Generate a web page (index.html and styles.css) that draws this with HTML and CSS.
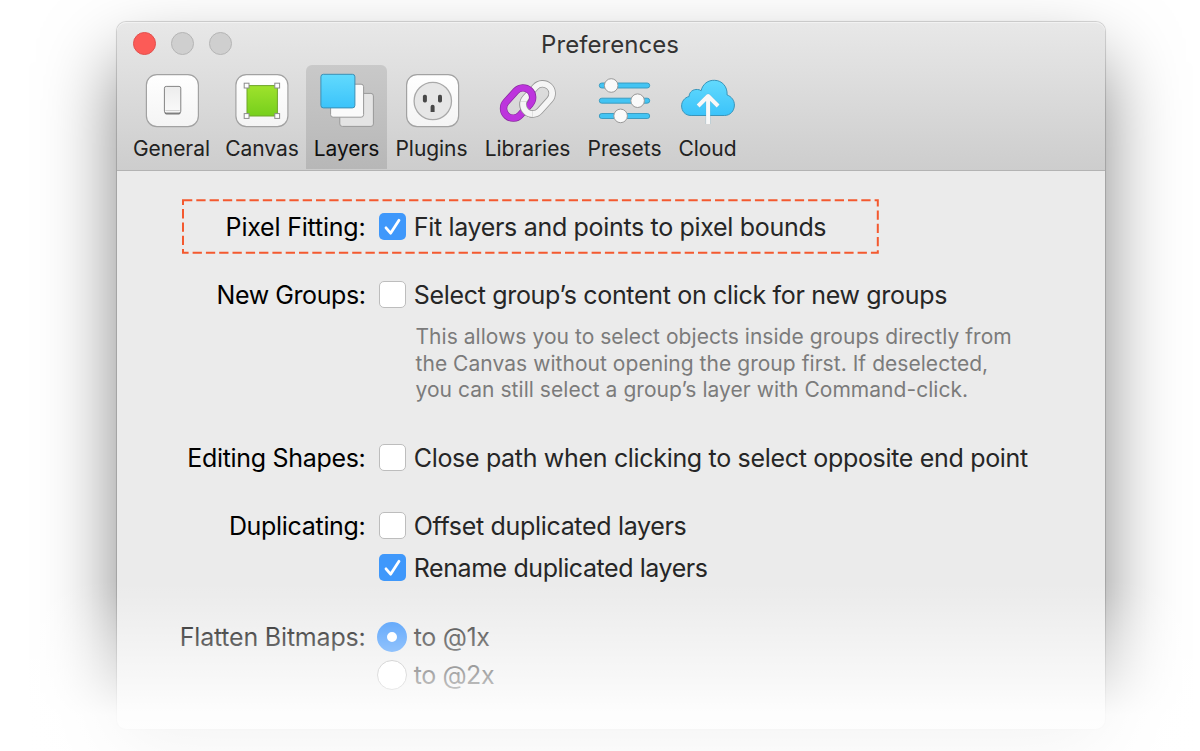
FILE: index.html
```
<!DOCTYPE html>
<html lang="en">
<head>
<meta charset="utf-8">
<title>Preferences</title>
<link rel="stylesheet" href="styles.css">
</head>
<body>
<main class="window">
  <header class="chrome">
    <div class="titlebar">
      <div class="lights"><i class="light close"></i><i class="light"></i><i class="light"></i></div>
      <h1 class="title">Preferences</h1>
    </div>
    <nav class="toolbar">
      <a class="tool general">
        <svg class="icon" viewBox="0.4 0 60 60">
          <defs>
            <linearGradient id="paper" x1="0" y1="0" x2="0" y2="1"><stop offset="0" stop-color="#fff"/><stop offset="1" stop-color="#f4f4f4"/></linearGradient>
            <linearGradient id="key" x1="0" y1="0" x2="0" y2="1"><stop offset="0" stop-color="#ececec"/><stop offset="1" stop-color="#fafafa"/></linearGradient>
          </defs>
          <rect class="tile" x="4.8" y="4.6" width="52" height="52" rx="10.5"/>
          <rect x="23" y="17" width="16" height="27.6" rx="1.8" fill="#777"/>
          <rect x="22.8" y="16.4" width="16.4" height="26.6" rx="1.8" fill="url(#key)" stroke="#868686" stroke-width="1"/>
          <path d="M23.8 40.6h14.4" stroke="#ccc"/>
        </svg>
        <span>General</span>
      </a>
      <a class="tool canvas">
        <svg class="icon" viewBox="0.4 0 60 60">
          <defs><linearGradient id="green" x1="0" y1="0" x2="0" y2="1"><stop offset="0" stop-color="#9fe22c"/><stop offset="1" stop-color="#76cf1c"/></linearGradient></defs>
          <rect class="tile" x="4.3" y="4.6" width="52" height="52" rx="10.5"/>
          <rect x="15.4" y="15.6" width="30.4" height="30.4" fill="url(#green)" stroke="#6fa52a"/>
          <g class="handle"><rect x="12.6" y="13.2" width="4.8" height="4.8"/><rect x="43.2" y="13.2" width="4.8" height="4.8"/><rect x="12.6" y="43.6" width="4.8" height="4.8"/><rect x="43.2" y="43.6" width="4.8" height="4.8"/></g>
        </svg>
        <span>Canvas</span>
      </a>
      <a class="tool layers active">
        <svg class="icon" viewBox="0.4 0 60 60">
          <defs><linearGradient id="sky" x1="0" y1="0" x2="0" y2="1"><stop offset="0" stop-color="#62dafd"/><stop offset="1" stop-color="#3bc3fa"/></linearGradient></defs>
          <rect x="23.2" y="23.4" width="33.6" height="33" rx="2.5" fill="#e4e4e4" stroke="#999"/>
          <rect x="14" y="14.2" width="33" height="33" rx="2.5" fill="#fafafa" stroke="#999"/>
          <rect x="4.3" y="4.3" width="34" height="33.6" rx="2.5" fill="url(#sky)" stroke="#3b8fb5"/>
        </svg>
        <span>Layers</span>
      </a>
      <a class="tool plugins">
        <svg class="icon" viewBox="0.4 0 60 60">
          <rect class="tile" x="5" y="4.6" width="52" height="52" rx="10.5"/>
          <circle cx="31.2" cy="31" r="18.7" fill="#e6e6e6" stroke="#a9a9a9" stroke-width="1.3"/>
          <g fill="#484848"><rect x="21.3" y="24.8" width="4" height="7.6" rx="1.6"/><rect x="36.4" y="24.8" width="4" height="7.6" rx="1.6"/><path d="M29 42v-5.2a2 2 0 0 1 4 0V42z"/></g>
        </svg>
        <span>Plugins</span>
      </a>
      <a class="tool libraries">
        <svg class="icon" viewBox="0.4 0 60 60">
          <defs>
            <clipPath id="front"><path d="M18 31.500h17v22H18z"/></clipPath>
            <g id="ring"><rect x="-17" y="-9.600" width="34" height="19.200" rx="9.600"/></g>
          </defs>
          <g fill="none" transform="translate(40 28.900) rotate(-48)"><use href="#ring" stroke="#999" stroke-width="7.400"/><use href="#ring" stroke="#f5f5f5" stroke-width="5.800"/></g>
          <g fill="none" transform="translate(20.500 33) rotate(-48)"><use href="#ring" stroke="#8a2ba0" stroke-width="7.400"/><use href="#ring" stroke="#bd34dd" stroke-width="6"/></g>
          <g clip-path="url(#front)"><g fill="none" transform="translate(40 28.900) rotate(-48)"><use href="#ring" stroke="#999" stroke-width="7.400"/><use href="#ring" stroke="#f5f5f5" stroke-width="5.800"/></g></g>
        </svg>
        <span>Libraries</span>
      </a>
      <a class="tool presets">
        <svg class="icon" viewBox="0.4 0 60 60">
          <g fill="#43c4f3" stroke="#3497bd" stroke-width=".9"><rect x="4.700" y="13" width="50.400" height="5" rx="2.500"/><rect x="4.700" y="28.200" width="50.400" height="5" rx="2.500"/><rect x="4.700" y="43.500" width="50.400" height="5" rx="2.500"/></g>
          <g fill="#fafafa" stroke="#999"><circle cx="16.600" cy="15.500" r="6.800"/><circle cx="43" cy="30.700" r="6.800"/><circle cx="26" cy="45.900" r="6.800"/></g>
        </svg>
        <span>Presets</span>
      </a>
      <a class="tool cloud">
        <svg class="icon" viewBox="0.4 0 60 60">
          <path d="M13.500 45.500C7.500 45.500 4 41 4 36c0-4.500 3-8.500 7.500-9.500C11.500 22 15.500 19 20 19.500c1.500 0 2.500.5 3.500 1.300C25 14 30.500 10 37 10.300 44.500 10.500 50 16.500 49.500 25 54 26.500 56.800 30.500 56.800 35c0 6-4.300 10.500-9.800 10.500z" fill="url(#sky)" stroke="#3a95ba"/>
          <path d="M30.500 54V27M20.500 36l10-10 10 10" fill="none" stroke="#5aa6c4" stroke-width="4.800" stroke-linejoin="round" opacity=".45"/>
          <path d="M30.500 54V27M20.500 36l10-10 10 10" fill="none" stroke="#f8f8f8" stroke-width="4" stroke-linejoin="round"/>
        </svg>
        <span>Cloud</span>
      </a>
    </nav>
  </header>

  <section class="form">
    <div class="row highlight">
      <svg class="dashes" viewBox="0 0 698 55"><rect x="1" y="1.300" width="694.800" height="52.400"/></svg>
      <span class="label loose">Pixel Fitting:</span><span class="slot"><i class="box on"><svg viewBox="0 0 27 27"><path d="M7 14.800l4.600 5.400L20 7.300"/></svg></i></span><span class="text">Fit layers and points to pixel bounds</span>
    </div>
    <div class="row groups">
      <span class="label tight">New Groups:</span><span class="slot"><i class="box"></i></span><span class="text">Select group’s content on click for new groups</span>
    </div>
    <p class="hint">This allows you to select objects inside groups directly from<br>the Canvas without opening the group first. If deselected,<br>you can still select a group’s layer with Command-click.</p>
    <div class="row editing">
      <span class="label">Editing Shapes:</span><span class="slot"><i class="box"></i></span><span class="text">Close path when clicking to select opposite end point</span>
    </div>
    <div class="row duplicating">
      <span class="label">Duplicating:</span><span class="slot"><i class="box"></i></span><span class="text">Offset duplicated layers</span>
    </div>
    <div class="row rename">
      <span class="label"></span><span class="slot"><i class="box on"><svg viewBox="0 0 27 27"><path d="M7 14.800l4.600 5.400L20 7.300"/></svg></i></span><span class="text tight">Rename duplicated layers</span>
    </div>
    <div class="row flatten">
      <span class="label loose">Flatten Bitmaps:</span><span class="slot"><i class="radio on"></i></span><span class="text">to @1x</span>
    </div>
    <div class="row double">
      <span class="label"></span><span class="slot"><i class="radio"></i></span><span class="text tight">to @2x</span>
    </div>
  </section>
</main>
<div class="fade"></div>
</body>
</html>
```
FILE: styles.css
```
* { box-sizing: border-box; }
body {
  margin: 0;
  height: 751px;
  padding: 22px 0 0 117px;
  overflow: hidden;
  position: relative;
  background: #fff;
  font-family: Inter, "Liberation Sans", sans-serif;
  color: #262626;
}
.window {
  width: 988px;
  height: 707px;
  border-radius: 9px;
  background: #ebebeb;
  box-shadow: 0 0 0 1px rgba(0,0,0,.1), 0 0 2px rgba(0,0,0,.2), 0 38px 76px -2px rgba(0,0,0,.5);
  display: flex;
  flex-direction: column;
}
.chrome {
  height: 149px;
  border-radius: 9px 9px 0 0;
  background: linear-gradient(#e8e8e8, #cdcdcd);
  border-bottom: 1px solid #b3b3b3;
  box-shadow: inset 0 1px 0 #f2f2f2;
}
.titlebar {
  height: 43px;
  display: grid;
  grid-template-columns: 120px 1fr 122px;
  align-items: center;
}
.lights { display: flex; gap: 15px; padding: 0 0 1px 15.500px; }
.light {
  flex: none;
  width: 23px;
  height: 23px;
  border-radius: 50%;
  background: #cfcfcf;
  border: 1px solid #b5b5b5;
}
.light.close { background: #fc5b57; border-color: #e2504d; }
.title {
  margin: 0;
  text-align: center;
  font-size: 24px;
  font-weight: 400;
  line-height: 43px;
  letter-spacing: .05px;
  padding-top: 1px;
  color: #333;
}
.toolbar { display: flex; padding-left: 9px; }
.tool {
  height: 104px;
  padding-top: 5px;
  display: flex;
  flex-direction: column;
  align-items: center;
  font-size: 21px;
  line-height: 26px;
  letter-spacing: -.05px;
  color: #222;
}
.tool span { white-space: nowrap; }
.icon { width: 60px; height: 60px; margin-bottom: 6px; overflow: visible; }
.general { width: 91px; }
.canvas { width: 89px; }
.canvas span { padding-left: 1px; }
.layers { width: 81px; }
.plugins { width: 89px; }
.libraries { width: 103px; }
.presets { width: 91px; }
.cloud { width: 75px; }
.active { background: linear-gradient(#c9c9c9, #b7b7b7); border-radius: 6px 6px 0 0; color: #111; }
.tile { fill: url(#paper); stroke: #a2a2a2; stroke-width: 1.2; }
.handle { fill: #fff; stroke: #8c8c8c; stroke-width: 1; }

.form { padding: 28px 0 0 65px; }
.row { display: flex; align-items: center; height: 30px; }
.highlight { position: relative; width: 698px; height: 55px; }
.dashes { position: absolute; left: 0; top: 0; width: 698px; height: 55px; }
.dashes rect { fill: none; stroke: #f4592f; stroke-width: 2; stroke-dasharray: 9.300 4; }
.label {
  flex: none;
  width: 183.500px;
  display: flex;
  justify-content: flex-end;
  font-size: 25px;
  line-height: 30px;
  letter-spacing: -.31px;
  color: #000;
  white-space: nowrap;
}
.slot { flex: none; width: 48px; display: flex; justify-content: center; margin-left: 2.500px; padding-bottom: 1px; }
.text { font-size: 25px; line-height: 30px; letter-spacing: -.32px; white-space: nowrap; margin-left: -2.300px; }
.loose { letter-spacing: -.2px; }
.tight { letter-spacing: -.42px; }
.box {
  width: 27px;
  height: 27px;
  border-radius: 5px;
  background: #fff;
  border: 1px solid #bdbdbd;
}
.box.on { border: 0; background: #3f98fb; }
.box svg { display: block; width: 27px; height: 27px; }
.box path { fill: none; stroke: #fff; stroke-width: 2.800; stroke-linecap: round; stroke-linejoin: round; }
.radio {
  width: 30px;
  height: 30px;
  border-radius: 50%;
  background: #fff;
  border: 1px solid #aaa;
}
.radio.on { background: #fff; border: 10px solid #3690fa; }
.groups { margin-top: 26px; }
.hint {
  margin: 14px 0 0 233.500px;
  font-size: 21px;
  line-height: 26.700px;
  letter-spacing: .045px;
  color: #7b7b7b;
  white-space: nowrap;
  height: 80px;
}
.editing { margin-top: 39px; }
.duplicating { margin-top: 38px; }
.rename { margin-top: 12px; }
.flatten { margin-top: 39px; }
.double { margin-top: 8px; }
.fade {
  position: absolute;
  left: 0;
  right: 0;
  bottom: 0;
  height: 171px;
  background: linear-gradient(rgba(255,255,255,0), rgba(255,255,255,.06) 16px, rgba(255,255,255,.35) 57px, rgba(255,255,255,.6) 94px, rgba(255,255,255,.92) 135px, rgba(255,255,255,.94));
  pointer-events: none;
}
```
